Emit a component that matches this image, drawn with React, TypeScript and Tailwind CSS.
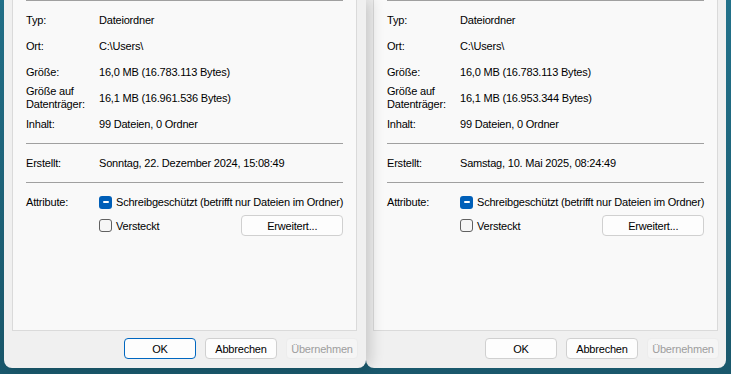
type DialogProps = {
  diskSize: string;
  created: string;
  okFocused?: boolean;
  onTop?: boolean;
  frameLeft: string;
  frameRight: string;
  buttonsRight: string;
  width: string;
};

const rows = [
  { label: 'Typ:', value: 'Dateiordner' },
  { label: 'Ort:', value: 'C:\\Users\\' },
  { label: 'Größe:', value: '16,0 MB (16.783.113 Bytes)' },
];

function Checkbox({ checked }: { checked?: boolean }) {
  if (checked) {
    return (
      <span className="flex h-[13px] w-[13px] shrink-0 items-center justify-center rounded-[3px] bg-[#005fb8]">
        <span className="h-[1.5px] w-[6px] rounded bg-white" />
      </span>
    );
  }
  return <span className="h-[13px] w-[13px] shrink-0 rounded-[3px] border border-[#616161] bg-[#f6f6f6]" />;
}

function DialogButton({ label, focused, disabled }: { label: string; focused?: boolean; disabled?: boolean }) {
  let cls = 'border-[#d0d0d0] bg-[#fdfdfd] text-black';
  if (focused) cls = 'border-[#0067c0] bg-[#fdfdfd] text-black';
  if (disabled) cls = 'border-[#ececec] bg-[#f5f5f5] text-[#9d9d9d]';
  return (
    <div className={`flex h-[21px] w-[72px] items-center justify-center rounded-[4px] border ${cls}`}>
      {label}
    </div>
  );
}

function Dialog({ diskSize, created, okFocused, onTop, frameLeft, frameRight, buttonsRight, width }: DialogProps) {
  return (
    <div
      className={`relative flex h-[368px] shrink-0 flex-col rounded-b-[8px] bg-[#f0f0f0] ${width} ${frameLeft} ${frameRight} ${
        onTop ? 'z-10 shadow-[5px_0_14px_rgba(0,0,0,0.16)]' : ''
      }`}
    >
      <div className="h-[331px] border-x border-b border-[#dadada] bg-[#f9f9f9] px-[13px]">
        <div className="h-px bg-[#a0a0a0]" />
        <div className="pt-[6px]">
          {rows.map((r) => (
            <div key={r.label} className="flex h-[26px] items-center">
              <span className="w-[73px] shrink-0">{r.label}</span>
              <span>{r.value}</span>
            </div>
          ))}
          <div className="flex h-[26px] items-center">
            <span className="w-[73px] shrink-0 leading-[13px]">
              Größe auf
              <br />
              Datenträger:
            </span>
            <span>{diskSize}</span>
          </div>
          <div className="flex h-[26px] items-center">
            <span className="w-[73px] shrink-0">Inhalt:</span>
            <span>99 Dateien, 0 Ordner</span>
          </div>
        </div>
        <div className="mt-[6px] h-px bg-[#a0a0a0]" />
        <div className="flex h-[38px] items-center">
          <span className="w-[73px] shrink-0">Erstellt:</span>
          <span>{created}</span>
        </div>
        <div className="h-px bg-[#a0a0a0]" />
        <div className="flex pt-[11px]">
          <span className="w-[73px] shrink-0 leading-[16px]">Attribute:</span>
          <div className="flex flex-1 flex-col">
            <div className="flex h-[16px] items-center gap-[4px] whitespace-nowrap">
              <Checkbox checked />
              <span>Schreibgeschützt (betrifft nur Dateien im Ordner)</span>
            </div>
            <div className="mt-[5px] flex items-center justify-between">
              <div className="flex items-center gap-[4px]">
                <Checkbox />
                <span>Versteckt</span>
              </div>
              <div className="flex h-[21px] w-[102px] items-center justify-center rounded-[4px] border border-[#d0d0d0] bg-[#fdfdfd]">
                Erweitert...
              </div>
            </div>
          </div>
        </div>
      </div>
      <div className={`mt-[7px] flex justify-end gap-[9px] ${buttonsRight}`}>
        <DialogButton label="OK" focused={okFocused} />
        <DialogButton label="Abbrechen" />
        <DialogButton label="Übernehmen" disabled />
      </div>
    </div>
  );
}

export default function App() {
  return (
    <div className="flex h-[374px] w-[731px] overflow-hidden bg-gradient-to-b from-[#22718a] to-[#1a586c] font-[family-name:Liberation_Sans,Arial,sans-serif] text-[11px] leading-[16px] tracking-[-0.2px] text-black">
      <div className="w-[4px] shrink-0" />
      <Dialog
        width="w-[362px]"
        frameLeft="pl-[8px]"
        frameRight="pr-[9px]"
        buttonsRight="-mr-px"
        diskSize="16,1 MB (16.961.536 Bytes)"
        created="Sonntag, 22. Dezember 2024, 15:08:49"
        okFocused
        onTop
      />
      <Dialog
        width="w-[360px]"
        frameLeft="pl-[7px]"
        frameRight="pr-[8px]"
        buttonsRight="-mr-px"
        diskSize="16,1 MB (16.953.344 Bytes)"
        created="Samstag, 10. Mai 2025, 08:24:49"
      />
    </div>
  );
}
